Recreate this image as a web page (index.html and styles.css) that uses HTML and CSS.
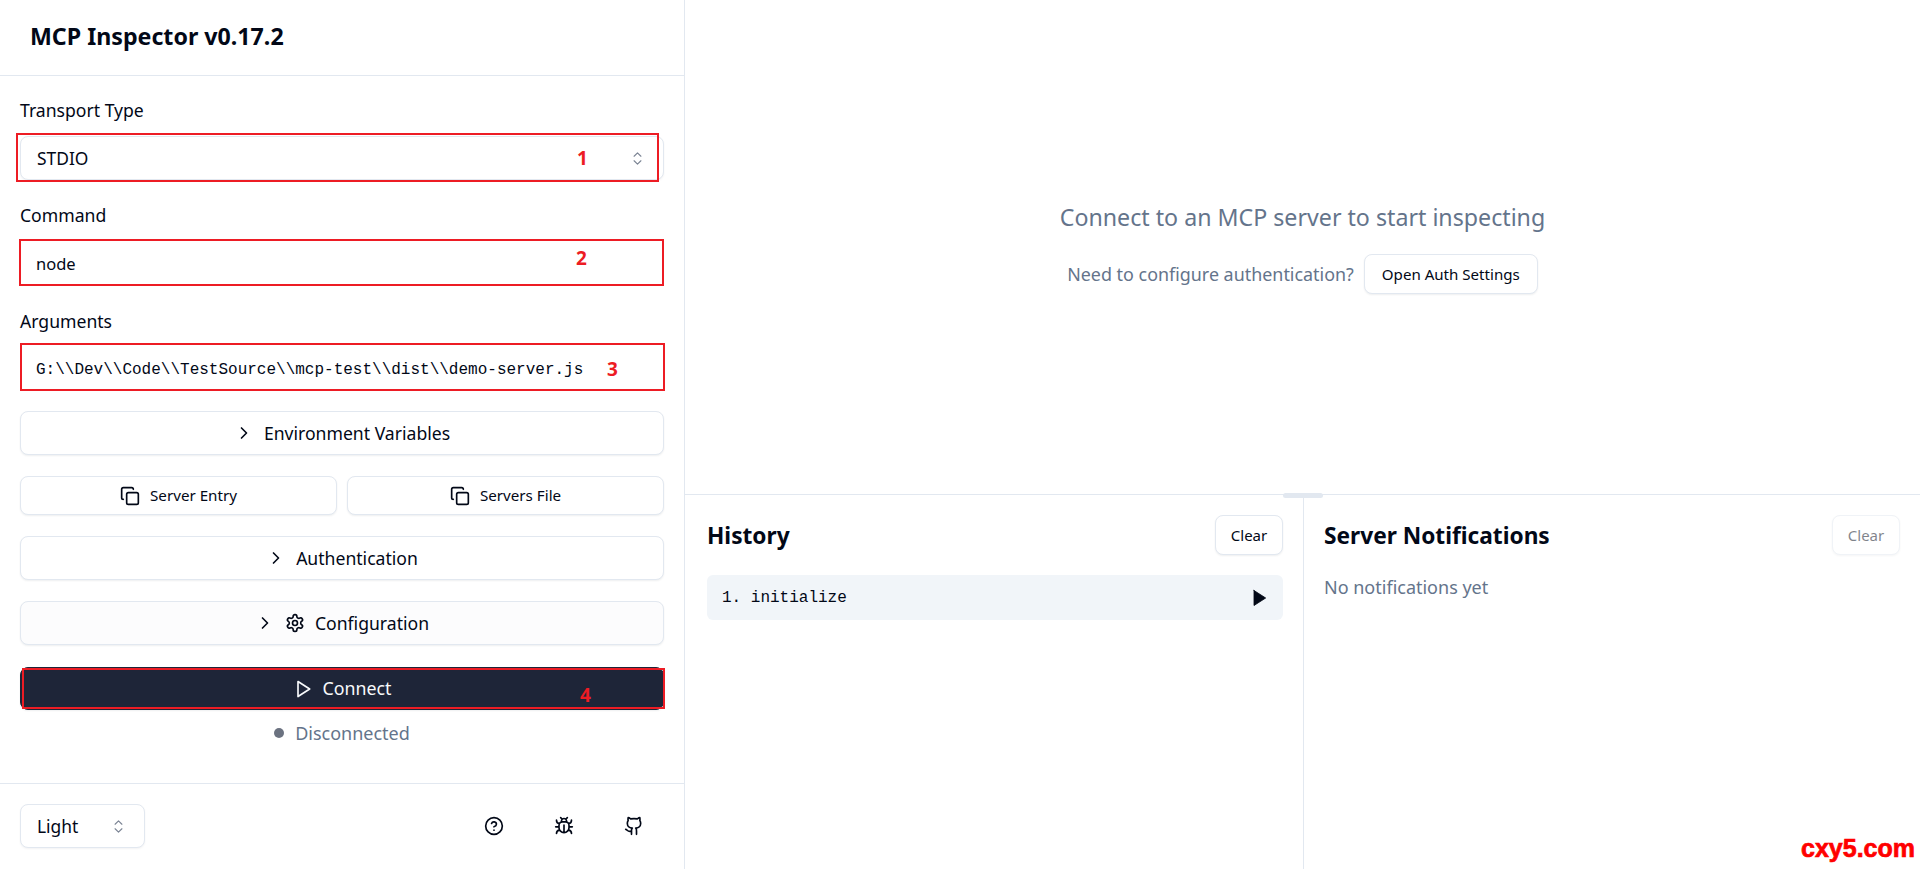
FILE: index.html
```html
<!DOCTYPE html>
<html lang="en">
<head>
<meta charset="utf-8">
<title>MCP Inspector</title>
<link rel="stylesheet" href="styles.css">
</head>
<body>
<svg class="sprite" aria-hidden="true">
  <symbol id="i-chevrons" viewBox="0 0 15 15"><path d="M4.5 5.5 7.5 2.5 10.5 5.5M4.5 9.5 7.5 12.5 10.5 9.5"/></symbol>
  <symbol id="i-chevron" viewBox="0 0 24 24"><path d="m9 18 6-6-6-6"/></symbol>
  <symbol id="i-copy" viewBox="0 0 24 24"><rect x="8" y="8" width="14" height="14" rx="2"/><path d="M4 16c-1.1 0-2-.9-2-2V4c0-1.1.9-2 2-2h10c1.1 0 2 .9 2 2"/></symbol>
  <symbol id="i-gear" viewBox="0 0 24 24"><path d="M12.22 2h-.44a2 2 0 0 0-2 2v.18a2 2 0 0 1-1 1.73l-.43.25a2 2 0 0 1-2 0l-.15-.08a2 2 0 0 0-2.73.73l-.22.38a2 2 0 0 0 .73 2.73l.15.1a2 2 0 0 1 1 1.72v.51a2 2 0 0 1-1 1.74l-.15.09a2 2 0 0 0-.73 2.73l.22.38a2 2 0 0 0 2.73.73l.15-.08a2 2 0 0 1 2 0l.43.25a2 2 0 0 1 1 1.73V20a2 2 0 0 0 2 2h.44a2 2 0 0 0 2-2v-.18a2 2 0 0 1 1-1.73l.43-.25a2 2 0 0 1 2 0l.15.08a2 2 0 0 0 2.73-.73l.22-.39a2 2 0 0 0-.73-2.73l-.15-.08a2 2 0 0 1-1-1.74v-.5a2 2 0 0 1 1-1.74l.15-.09a2 2 0 0 0 .73-2.73l-.22-.38a2 2 0 0 0-2.73-.73l-.15.08a2 2 0 0 1-2 0l-.43-.25a2 2 0 0 1-1-1.73V4a2 2 0 0 0-2-2z"/><circle cx="12" cy="12" r="3"/></symbol>
  <symbol id="i-play" viewBox="0 0 24 24"><polygon points="6 3 20 12 6 21 6 3"/></symbol>
  <symbol id="i-help" viewBox="0 0 24 24"><circle cx="12" cy="12" r="10"/><path d="M9.09 9a3 3 0 0 1 5.83 1c0 2-3 3-3 3M12 17h.01"/></symbol>
  <symbol id="i-bug" viewBox="0 0 24 24"><path d="m8 2 1.88 1.88M14.12 3.88 16 2M9 7.13v-1a3.003 3.003 0 1 1 6 0v1M12 20c-3.3 0-6-2.7-6-6v-3a4 4 0 0 1 4-4h4a4 4 0 0 1 4 4v3c0 3.3-2.7 6-6 6M12 20v-9M6.53 9C4.6 8.8 3 7.1 3 5M6 13H2M3 21c0-2.1 1.7-3.9 3.8-4M20.97 5c0 2.1-1.6 3.8-3.5 4M22 13h-4M17.2 17c2.1.1 3.8 1.9 3.8 4"/></symbol>
  <symbol id="i-github" viewBox="0 0 24 24"><path d="M15 22v-4a4.8 4.8 0 0 0-1-3.5c3 0 6-2 6-5.5.08-1.25-.27-2.48-1-3.5.28-1.15.28-2.35 0-3.5 0 0-1 0-3 1.5-2.64-.5-5.36-.5-8 0C6 2 5 2 5 2c-.3 1.15-.3 2.35 0 3.5A5.403 5.403 0 0 0 4 9c0 3.5 3 5.5 6 5.5-.39.49-.68 1.05-.85 1.65-.17.6-.22 1.23-.15 1.85v4M9 18c-4.51 2-5-2-7-2"/></symbol>
</svg>

<div class="app">
  <aside class="sidebar">
    <header class="side-head"><h1>MCP Inspector v0.17.2</h1></header>
    <div class="form">
      <div class="label">Transport Type</div>
      <div class="control select marked">
        <span>STDIO</span>
        <svg class="ic-updown"><use href="#i-chevrons"/></svg>
        <i class="mark mark-1"></i><b class="num num-1">1</b>
      </div>
      <div class="label label-next">Command</div>
      <div class="control input input-node marked">
        <span>node</span>
        <i class="mark mark-2"></i><b class="num num-2">2</b>
      </div>
      <div class="label label-args">Arguments</div>
      <div class="control input mono marked">
        <span>G:\\Dev\\Code\\TestSource\\mcp-test\\dist\\demo-server.js</span>
        <i class="mark mark-3"></i><b class="num num-3">3</b>
      </div>
      <button class="btn wide gap-a"><svg class="ic"><use href="#i-chevron"/></svg><span>Environment Variables</span></button>
      <div class="split">
        <button class="btn small"><svg class="ic"><use href="#i-copy"/></svg><span class="raise">Server Entry</span></button>
        <button class="btn small"><svg class="ic"><use href="#i-copy"/></svg><span class="raise">Servers File</span></button>
      </div>
      <button class="btn wide gap-b"><svg class="ic"><use href="#i-chevron"/></svg><span>Authentication</span></button>
      <button class="btn wide gap-b tinted"><svg class="ic"><use href="#i-chevron"/></svg><svg class="ic"><use href="#i-gear"/></svg><span>Configuration</span></button>
      <button class="btn primary marked"><svg class="ic"><use href="#i-play"/></svg><span class="raise">Connect</span>
        <i class="mark mark-4"></i><b class="num num-4">4</b>
      </button>
      <div class="status"><i class="dot"></i><span>Disconnected</span></div>
    </div>
    <footer class="side-foot">
      <div class="control select theme"><span>Light</span><svg class="ic-updown"><use href="#i-chevrons"/></svg></div>
      <div class="foot-icons">
        <svg class="ic-foot"><use href="#i-help"/></svg>
        <svg class="ic-foot"><use href="#i-bug"/></svg>
        <svg class="ic-foot"><use href="#i-github"/></svg>
      </div>
    </footer>
  </aside>

  <main class="main">
    <section class="welcome">
      <p class="welcome-title">Connect to an MCP server to start inspecting</p>
      <div class="welcome-row">
        <span>Need to configure authentication?</span>
        <button class="btn auth">Open Auth Settings</button>
      </div>
    </section>
    <section class="bottom">
      <i class="handle"></i>
      <div class="pane pane-history">
        <div class="pane-head"><h2>History</h2><button class="btn clear">Clear</button></div>
        <div class="history-item"><span>1. initialize</span><svg class="ic-run"><use href="#i-play"/></svg></div>
      </div>
      <div class="pane pane-notes">
        <div class="pane-head"><h2>Server Notifications</h2><button class="btn clear off">Clear</button></div>
        <p class="empty">No notifications yet</p>
      </div>
    </section>
  </main>
</div>
<div class="watermark">cxy5.com</div>
</body>
</html>
```

FILE: styles.css
```css
* { box-sizing: border-box; }
html, body { margin: 0; height: 100%; overflow: hidden; }
body { font-family: "Noto Sans", "Open Sans", sans-serif; color: #020817; background: #fff; font-size: 16px; }
.sprite { display: none; }
svg use { fill: none; stroke: currentColor; stroke-width: 2; stroke-linecap: round; stroke-linejoin: round; }
button { font: inherit; color: inherit; padding: 0; }

.app { display: flex; height: 869px; }
.sidebar { width: 685px; flex: none; border-right: 1px solid #e2e8f0; display: flex; flex-direction: column; }
.side-head { height: 76px; border-bottom: 1px solid #e2e8f0; padding: 0 30px; display: flex; align-items: center; }
.side-head h1 { margin: 0 0 3px; font-size: 23.2px; font-weight: 700; line-height: 30px; }

.form { flex: 1; padding: 23px 20px 0; display: flex; flex-direction: column; }
.label { font-size: 17.6px; height: 24px; line-height: 22px; }
.label-next { margin-top: 24px; }
.label-args { margin-top: 25px; line-height: 24px; }
.control { display: flex; align-items: center; justify-content: space-between; border-radius: 8px; padding: 0 17px 0 16px; font-size: 17.4px; background: #fff; }
.select { height: 44px; margin-top: 13px; border: 1px solid #e2e8f0; box-shadow: 0 1px 2px rgba(15, 23, 42, .05); }
.input { height: 40px; margin-top: 16px; }
.input-node { font-size: 16.5px; padding-bottom: 2px; }
.mono { font-family: "Liberation Mono", monospace; font-size: 16px; padding-top: 2px; }
.ic-updown { width: 17px; height: 17px; color: #7b8494; flex: none; }
.ic-updown use { stroke-width: 1; }

.marked { position: relative; }
.mark { position: absolute; border: 2px solid #ed1c24; pointer-events: none; }
.mark-1 { left: -5px; right: 4px; top: -4px; bottom: -3px; }
.mark-2 { left: -1px; right: 0; top: -5px; bottom: -2px; }
.mark-3 { left: 0; right: -1px; top: -6px; bottom: -2px; }
.mark-4 { left: 1px; right: -2px; top: 0; bottom: 0; }
.num { position: absolute; color: #ed1c24; font: 700 19px/24px "Noto Sans", sans-serif; }
.num-1 { left: 556px; top: 9px; }
.num-2 { left: 556px; top: 2px; }
.num-3 { left: 587px; top: 8px; }
.num-4 { left: 559px; top: 15px; }

.btn { display: flex; align-items: center; justify-content: center; gap: 10px; border: 1px solid #e2e8f0; border-radius: 8px; background: #fff; box-shadow: 0 1px 2px rgba(15, 23, 42, .07); cursor: pointer; }
.raise { padding-bottom: 2px; }
.wide { height: 44px; font-size: 17.6px; }
.gap-a { margin-top: 22px; }
.gap-b { margin-top: 21px; }
.tinted { background: #fcfcfd; }
.split { display: grid; grid-template-columns: 1fr 1fr; gap: 10px; margin-top: 21px; }
.small { height: 39px; font-size: 15.2px; }
.ic { width: 20px; height: 20px; flex: none; }
.primary { height: 43px; margin-top: 22px; font-size: 17.8px; color: #f8fafc; background: #1e2538; border-color: #1e2538; }
.status { display: flex; align-items: center; justify-content: center; gap: 11px; margin-top: 11px; line-height: 24px; color: #64748b; font-size: 18px; }
.dot { width: 10px; height: 10px; border-radius: 50%; background: #6b7280; }

.side-foot { height: 86px; border-top: 1px solid #e2e8f0; padding: 20px 40px 0 20px; display: flex; justify-content: space-between; align-items: flex-start; }
.theme { width: 125px; margin-top: 0; }
.foot-icons { display: flex; gap: 50px; padding: 12px 0 0; }
.ic-foot { width: 20px; height: 20px; flex: none; }

.main { flex: 1; min-width: 0; display: flex; flex-direction: column; }
.welcome { height: 495px; display: flex; flex-direction: column; align-items: center; padding-top: 201px; color: #64748b; border-bottom: 1px solid #e2e8f0; }
.welcome-title { margin: 0; font-size: 23.2px; line-height: 32px; }
.welcome-row { display: flex; align-items: center; gap: 10px; margin-top: 21px; font-size: 17.9px; }
.auth { width: 174px; height: 40px; font-size: 15.1px; color: #020817; }

.bottom { flex: 1; position: relative; display: flex; }
.handle { position: absolute; left: 598px; top: -2px; width: 40px; height: 5px; border-radius: 3px; background: #e2e8f0; }
.pane { padding: 20px 20px 0 21px; }
.pane-history { width: 619px; padding-left: 22px; border-right: 1px solid #e2e8f0; }
.pane-notes { flex: 1; padding-left: 20px; }
.pane-head { display: flex; justify-content: space-between; align-items: center; height: 40px; }
.pane-head h2 { margin: 0; font-size: 22.7px; font-weight: 700; }
.clear { width: 68px; height: 40px; font-size: 15px; }
.off { opacity: .5; }
.history-item { display: flex; align-items: center; justify-content: space-between; height: 45px; margin-top: 20px; padding: 0 14px 0 15px; border-radius: 6px; background: #f1f5f9; font-family: "Liberation Mono", monospace; font-size: 16px; }
.ic-run { width: 20px; height: 20px; }
.ic-run use { fill: #020817; stroke: #020817; stroke-width: 1; }
.empty { margin: 20px 0 0; font-size: 18px; line-height: 24px; color: #64748b; }

.watermark { position: absolute; right: 5px; bottom: 5px; color: #f00; font: 700 25px/32px "Liberation Sans", sans-serif; -webkit-text-stroke: .7px #f00; }
```
